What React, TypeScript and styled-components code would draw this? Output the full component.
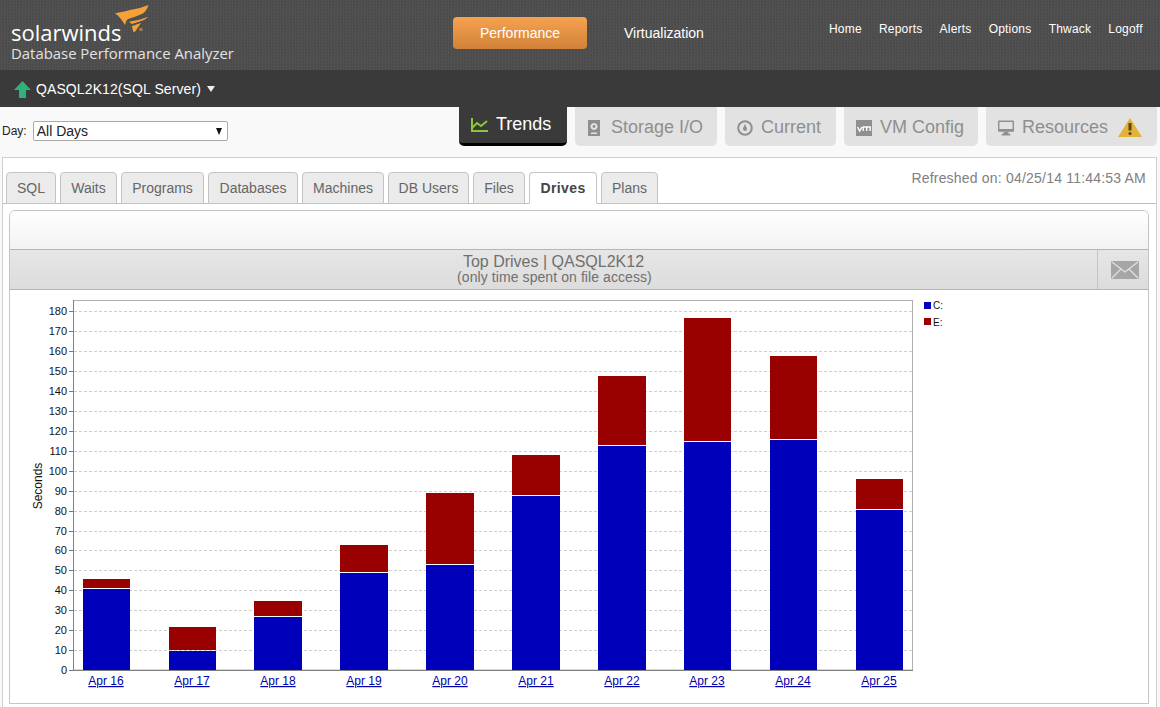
import React from "react";
import styled, { createGlobalStyle } from "styled-components";

const Global = createGlobalStyle`
  html, body { margin: 0; padding: 0; background: #f9f9f9; overflow: hidden; }
  body { font-family: "Liberation Sans", Arial, sans-serif; }
  * { box-sizing: border-box; }
`;
const Page = styled.div`width: 1160px; height: 707px; overflow: hidden; background: #f9f9f9;`;
const Header = styled.header`
  height: 70px; display: flex; position: relative; color: #fff;
  background-color: #4e4e4e;
  background-image: repeating-conic-gradient(#525252 0 25%, #4a4a4a 0 50%);
  background-size: 3px 3px;
`;
const Brand = styled.div`width: 453px; padding: 21px 0 0 11px; position: relative; flex: none;`;
const LogoWord = styled.div`font: 400 22px/22px "Open Sans", sans-serif; color: #fff;`;
const Product = styled.div`font: 400 14.9px/20px "Open Sans", sans-serif; color: #e2e2e2; white-space: nowrap;`;
const Flame = styled.svg`position: absolute; left: 113px; top: 4px;`;
const Modes = styled.nav`display: flex; padding-top: 17px; align-items: flex-start; flex: none; width: 363px;`;
const PerfButton = styled.div`
  width: 134px; height: 32px; border-radius: 4px; font-size: 14px; line-height: 32px; text-align: center;
  background: linear-gradient(#f6a24f, #d18238);
`;
const ModeLink = styled.div`font-size: 14px; line-height: 32px; margin-left: 37px;`;
const TopLinks = styled.nav`display: flex; gap: 17.2px; padding-top: 22px; font-size: 12px; line-height: 15px; margin-left: 13px; letter-spacing: 0.2px;`;
const ServerBar = styled.div`height: 37px; background: #3a3a3a; display: flex; align-items: center; padding: 1px 0 0 14px; color: #fff; font-size: 14px;`;
const ServerName = styled.span`margin-left: 5px; letter-spacing: 0.1px;`;
const Caret = styled.span`
  width: 0; height: 0; border-left: 4px solid transparent; border-right: 4px solid transparent;
  border-top: 6px solid #eee; margin-left: 6px;
`;
const Toolbar = styled.div`height: 50px; display: flex; justify-content: space-between; padding: 0 3px 0 2px;`;
const DayGroup = styled.div`display: flex; align-items: flex-start; padding-top: 14px; font-size: 12px; color: #222; line-height: 20px;`;
const DaySelect = styled.div`
  width: 195px; height: 20px; margin-left: 6px; border: 1px solid #a9a9a9; border-radius: 2px; background: #fff;
  display: flex; align-items: center; justify-content: space-between; padding: 0 5px 0 3px; font-size: 14px; color: #222;
`;
const SelectCaret = styled.span`width: 0; height: 0; border-left: 3.5px solid transparent; border-right: 3.5px solid transparent; border-top: 7px solid #111;`;
const ViewTabs = styled.div`display: flex; gap: 8px;`;
const ViewTab = styled.div<{ $w: number; $active?: boolean }>`
  width: ${p => p.$w}px; height: 39px; border-radius: 0 0 5px 5px; display: flex; align-items: center; white-space: nowrap;
  font-size: 18px; padding: 2px 0 0 12px; gap: 8px;
  background: ${p => (p.$active ? "#3a3a3a" : "#e2e2e2")};
  color: ${p => (p.$active ? "#fff" : "#8f8f8f")};
  ${p => p.$active && "border-bottom: 3px solid #000; padding-top: 0; padding-bottom: 1px;"}
`;
const StorageIcon = styled.svg`margin: 0 3px 0 1px;`;
const Warn = styled.svg`margin-left: 2px;`;
const Card = styled.main`
  margin: 0 3px 0 2px; height: 600px; background: #fff; border: 1px solid #cfcfcf; padding-top: 14px; position: relative;
`;
const Refreshed = styled.div`position: absolute; right: 10px; top: 12px; font-size: 14px; line-height: 17px; color: #808080; letter-spacing: 0.2px;`;
const TabRow = styled.div`display: flex; gap: 4px; padding-left: 3px; border-bottom: 1px solid #bdbdbd; height: 32px; align-items: flex-start;`;
const Tab = styled.div<{ $w: number; $active?: boolean }>`
  width: ${p => p.$w}px; height: 32px; border: 1px solid #c4c4c4; border-radius: 4px 4px 0 0; text-align: center;
  font-size: 14px; line-height: 30px; color: ${p => (p.$active ? "#444" : "#666")};
  font-weight: ${p => (p.$active ? 700 : 400)};
  letter-spacing: ${p => (p.$active ? "0.4px" : "0")};
  background: ${p => (p.$active ? "#fff" : "#ebebeb")};
  ${p => p.$active && "border-bottom-color: #fff;"}
`;
const Panel = styled.section`
  margin: 6px 7px 0 6px; height: 494px; border: 1px solid #c4c4c4; border-radius: 6px 6px 0 0; overflow: hidden;
`;
const PanelTop = styled.div`height: 39px; background: linear-gradient(#fff, #f2f2f2); border-bottom: 1px solid #b5b5b5;`;
const TitleBar = styled.div`height: 40px; display: flex; background: linear-gradient(#e6e6e6, #dcdcdc); border-bottom: 1px solid #b5b5b5;`;
const TitleText = styled.div`flex: 1; text-align: center; color: #707070; padding-top: 3px;`;
const TitleMain = styled.div`font-size: 16px; line-height: 17px;`;
const TitleSub = styled.div`font-size: 14px; line-height: 14px; letter-spacing: 0.08px; margin-left: 2px;`;
const MailCell = styled.div`width: 51px; border-left: 1px solid #c4c4c4; display: flex; align-items: center; justify-content: center; padding-left: 3px;`;
const Chart = styled.svg`display: block;`;

const cValues = [41, 10, 27, 49, 53, 88, 113, 115, 116, 81];
const totals = [46, 22, 35, 63, 89, 108, 148, 177, 158, 96];
const centers = [106, 192, 278, 364, 450, 536, 622, 707, 793, 879];
const lefts = [83, 169, 254, 340, 426, 512, 598, 684, 770, 856];
const rights = [130, 216, 302, 388, 474, 560, 646, 731, 817, 903];
const days = ["Apr 16", "Apr 17", "Apr 18", "Apr 19", "Apr 20", "Apr 21", "Apr 22", "Apr 23", "Apr 24", "Apr 25"];
const OX = 10, OY = 290;
const yAt = (v: number) => 670 - v * 1.992 - OY;

function TopChart() {
  const ticks = Array.from({ length: 19 }, (_, i) => i * 10);
  return (
    <Chart width={1138} height={414} viewBox="0 0 1138 414" fontFamily="'Liberation Sans', Arial, sans-serif">
      <rect x={73.5 - OX} y={300.5 - OY} width={839} height={369.5} fill="#fff" stroke="#b0b0b0" />
      {ticks.map(t => (
        <g key={t}>
          {t > 0 && <line x1={74 - OX} x2={912 - OX} y1={Math.round(yAt(t)) + 0.5} y2={Math.round(yAt(t)) + 0.5} stroke="#cfcfcf" strokeDasharray="3 2" />}
          <line x1={69 - OX} x2={73 - OX} y1={Math.round(yAt(t)) + 0.5} y2={Math.round(yAt(t)) + 0.5} stroke="#777" />
          <text x={67 - OX} y={Math.round(yAt(t)) + 4} fontSize={11} textAnchor="end" fill="#111">{t}</text>
        </g>
      ))}
      <line x1={73.5 - OX} x2={73.5 - OX} y1={300 - OY} y2={670 - OY} stroke="#808080" />
      <line x1={73 - OX} x2={913 - OX} y1={670.5 - OY} y2={670.5 - OY} stroke="#808080" />
      {centers.map((c, i) => {
        const x = lefts[i] - OX;
        const w = rights[i] - lefts[i];
        const topY = Math.round(yAt(totals[i]) + 0.6);
        const midY = Math.round(yAt(cValues[i]));
        return (
          <g key={c}>
            <rect x={x} y={topY} width={w} height={midY - topY} fill="#990000" />
            <rect x={x} y={midY + 1} width={w} height={670 - OY - midY - 1} fill="#0000bb" />
            <text x={c - OX} y={685 - OY} fontSize={12} textAnchor="middle" fill="#0000aa" textDecoration="underline">{days[i]}</text>
          </g>
        );
      })}
      <text transform={`translate(${42 - OX} ${486 - OY}) rotate(-90)`} fontSize={12} textAnchor="middle" fill="#111">Seconds</text>
      <rect x={924 - OX} y={302 - OY} width={7} height={7} fill="#0000bb" />
      <text x={933 - OX} y={309 - OY} fontSize={10} fill="#111">C:</text>
      <rect x={924 - OX} y={318 - OY} width={7} height={7} fill="#990000" />
      <text x={933 - OX} y={326 - OY} fontSize={10} fill="#111">E:</text>
    </Chart>
  );
}

export default function App() {
  return (
    <Page>
      <Global />
      <Header>
        <Brand>
          <LogoWord>solarwinds</LogoWord>
          <Product>Database Performance Analyzer</Product>
          <Flame width="38" height="30" viewBox="0 0 38 30">
            <path d="M2 9.3 C8 8 12 7.5 17 6 C24 5 30 3 35.5 1 C34.5 4 33 7 30.3 9.3 C27 11 24.5 11.8 22 12.7 C18.5 13.5 15.5 14.5 13.7 16 L12 21 C9 16 6 12 2 9.3 Z" fill="#f5a13a" />
            <path d="M16 17.7 C23 16.5 30 15 35.3 12.7 C33 15 31 16 28.7 16.7 C25 18 22 19 18.7 20 Z" fill="#f5a13a" />
            <path d="M18.7 22 C22 21.3 25 20 28 18.7 C26 22 24 25 22 27.7 L20 27.7 C20 26 19.5 24 18.7 22 Z" fill="#f5a13a" />
            <rect x="26.5" y="24" width="3" height="3" fill="#a87c55" />
          </Flame>
        </Brand>
        <Modes>
          <PerfButton>Performance</PerfButton>
          <ModeLink>Virtualization</ModeLink>
        </Modes>
        <TopLinks>
          <span>Home</span><span>Reports</span><span>Alerts</span><span>Options</span><span>Thwack</span><span>Logoff</span>
        </TopLinks>
      </Header>
      <ServerBar>
        <svg width="17" height="17" viewBox="0 0 17 17"><path d="M8.5 0 L17 9 H12 V17 H5 V9 H0 Z" fill="#2fb17a" /></svg>
        <ServerName>QASQL2K12(SQL Server)</ServerName>
        <Caret />
      </ServerBar>
      <Toolbar>
        <DayGroup>
          Day:
          <DaySelect>All Days<SelectCaret /></DaySelect>
        </DayGroup>
        <ViewTabs>
          <ViewTab $w={108} $active>
            <svg width="17" height="14" viewBox="0 0 17 14" fill="none" stroke="#8cc63f" strokeWidth="2"><path d="M1 0 V13 H17" /><path d="M1 10 L6 5 L10 8 L16 3" /></svg>
            Trends
          </ViewTab>
          <ViewTab $w={142}>
            <StorageIcon width="12" height="16" viewBox="0 0 12 16">
              <path fillRule="evenodd" d="M0 0 H12 V16 H0 Z M6 3 a3.5 3.5 0 1 0 .01 0 Z M3 12.5 V14 H9 V12.5 Z" fill="#8f8f8f" />
              <circle cx="6" cy="6.5" r="1.4" fill="#8f8f8f" />
            </StorageIcon>
            Storage I/O
          </ViewTab>
          <ViewTab $w={111}>
            <svg width="16" height="16" viewBox="0 0 16 16" fill="none"><circle cx="8" cy="8" r="6.8" stroke="#8f8f8f" strokeWidth="2" /><path d="M8 3.5 C8.6 6 10 7.5 10 9 A2 2 0 0 1 6 9 C6 7.5 7.4 6 8 3.5 Z" fill="#8f8f8f" /></svg>
            Current
          </ViewTab>
          <ViewTab $w={134}>
            <svg width="16" height="16" viewBox="0 0 16 16"><rect width="16" height="16" fill="#8f8f8f" /><path d="M1.5 7 L3.7 11 L5.9 7 M7.2 11 V7 H14.2 V11 M10.7 7 V11" fill="none" stroke="#fff" strokeWidth="1.4" /></svg>
            VM Config
          </ViewTab>
          <ViewTab $w={171}>
            <svg width="16" height="16" viewBox="0 0 17 16"><path fillRule="evenodd" d="M1 0 H16 Q17 0 17 1 V11 Q17 12 16 12 H1 Q0 12 0 11 V1 Q0 0 1 0 Z M1.5 1.5 V9 H15.5 V1.5 Z" fill="#8f8f8f" /><path d="M6 12 H11 V14 H13 V16 H4 V14 H6 Z" fill="#8f8f8f" /></svg>
            Resources
            <Warn width="24" height="20" viewBox="0 0 24 20"><path d="M12 0 L24 19 H0 Z" fill="#e2b23a" /><path d="M12 5 V12.5" stroke="#5a4712" strokeWidth="3" /><circle cx="12" cy="15.5" r="1.6" fill="#5a4712" /></Warn>
          </ViewTab>
        </ViewTabs>
      </Toolbar>
      <Card>
        <Refreshed>Refreshed on: 04/25/14 11:44:53 AM</Refreshed>
        <TabRow>
          <Tab $w={50}>SQL</Tab>
          <Tab $w={57}>Waits</Tab>
          <Tab $w={83}>Programs</Tab>
          <Tab $w={90}>Databases</Tab>
          <Tab $w={82}>Machines</Tab>
          <Tab $w={81}>DB Users</Tab>
          <Tab $w={52}>Files</Tab>
          <Tab $w={68} $active>Drives</Tab>
          <Tab $w={57}>Plans</Tab>
        </TabRow>
        <Panel>
          <PanelTop />
          <TitleBar>
            <TitleText>
              <TitleMain>Top Drives | QASQL2K12</TitleMain>
              <TitleSub>(only time spent on file access)</TitleSub>
            </TitleText>
            <MailCell>
              <svg width="28" height="18" viewBox="0 0 28 18"><rect width="28" height="18" rx="1" fill="#a6a6a6" /><path d="M1 1 L14 11 L27 1 M1 17 L10 8 M27 17 L18 8" fill="none" stroke="#e2e2e2" strokeWidth="1.2" /></svg>
            </MailCell>
          </TitleBar>
          <TopChart />
        </Panel>
      </Card>
    </Page>
  );
}
